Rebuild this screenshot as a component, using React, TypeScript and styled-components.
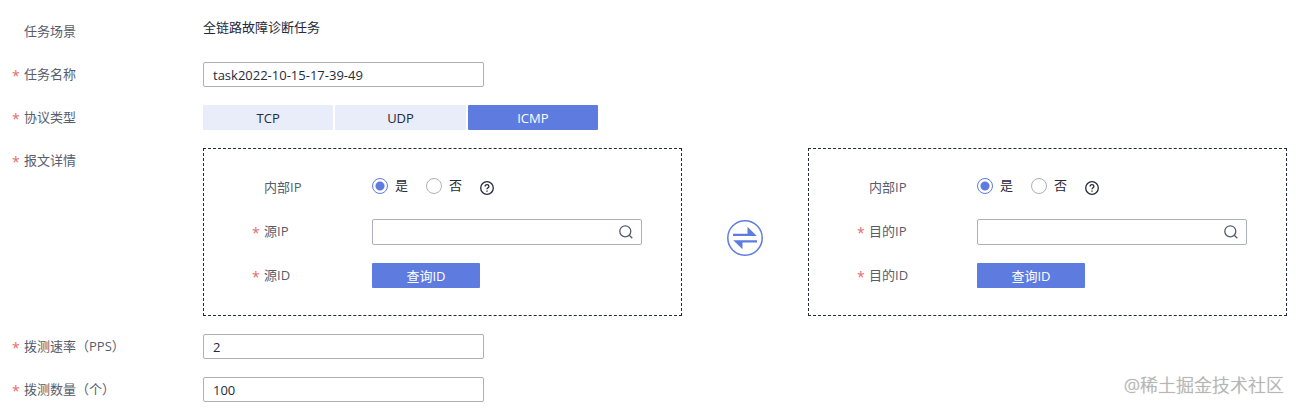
import React, { useId, useState } from "react";
import styled, { createGlobalStyle } from "styled-components";

const BLUE = "#5e7ce0";
const INK = "#252b3a";
const FONT = '"Open Sans", "Noto Sans CJK SC", sans-serif';

const GlobalStyle = createGlobalStyle`
  *, *::before, *::after { box-sizing: border-box; }
  body {
    margin: 0;
    background: #fff;
    color: ${INK};
    font: 13px/16px ${FONT};
  }
  button, input { font: inherit; color: inherit; }
`;

const Form = styled.form`
  position: relative;
  display: flex;
  flex-direction: column;
  gap: 18px;
  padding: 19px 11px 8px 12px;
`;

const Row = styled.div<{ $labelWidth: number }>`
  display: grid;
  grid-template-columns: ${(p) => p.$labelWidth}px minmax(0, 1fr);
  align-items: start;
  min-height: 25px;
`;

const LabelText = styled.label<{ $required?: boolean }>`
  display: flex;
  height: 24px;
  line-height: 24px;
  color: #575d6c;
  &::before {
    content: "${(p) => (p.$required ? "*" : "")}";
    width: 12px;
    flex: none;
    padding-top: 2px;
    color: #e8696b;
    font-size: 14px;
  }
`;

const TextInput = styled.input`
  width: 281px;
  height: 25px;
  padding: 0 9px;
  border: 1px solid #adb0b8;
  border-radius: 2px;
  background: #fff;
  outline: none;
`;

const Segments = styled.div`
  display: grid;
  grid-template-columns: repeat(3, 1fr);
  gap: 2px;
  width: 395px;
`;

const Segment = styled.button<{ $active: boolean }>`
  height: 25px;
  padding: 0;
  border: 0;
  border-radius: 1px;
  background: ${(p) => (p.$active ? BLUE : "#e9edfa")};
  color: ${(p) => (p.$active ? "#fff" : INK)};
`;

const Endpoints = styled.div`
  display: grid;
  grid-template-columns: minmax(0, 1fr) 36px minmax(0, 1fr);
  column-gap: 45px;
`;

const Panel = styled.fieldset`
  display: flex;
  flex-direction: column;
  gap: 18px;
  min-width: 0;
  margin: 0;
  padding: 26px 39px 27px 48px;
  border: 1px dashed #252b3a;
`;

const Radios = styled.div`
  display: flex;
  align-items: flex-start;
  gap: 18px;
  height: 26px;
  padding-top: 3px;
`;

const RadioLabel = styled.label`
  display: flex;
  gap: 7px;
  line-height: 14px;
`;

const Radio = styled.input`
  appearance: none;
  width: 16px;
  height: 16px;
  margin: 0;
  border: 1px solid #adb0b8;
  border-radius: 50%;
  background: #fff;
  &:checked {
    border-color: ${BLUE};
    background: radial-gradient(circle, ${BLUE} 0 4px, #fff 5px);
  }
`;

const HelpButton = styled.button`
  display: flex;
  padding: 3px 0 0;
  border: 0;
  background: none;
`;

const SearchField = styled.div`
  display: flex;
  align-items: center;
  height: 26px;
  padding-right: 8px;
  border: 1px solid #adb0b8;
  border-radius: 2px;
`;

const SearchInput = styled.input`
  flex: 1;
  min-width: 0;
  height: 24px;
  padding: 0 9px;
  border: 0;
  background: none;
  outline: none;
`;

const IconButton = styled.button`
  display: flex;
  padding: 0;
  border: 0;
  background: none;
`;

const QueryButton = styled.button`
  width: 108px;
  height: 25px;
  padding: 0;
  border: 0;
  border-radius: 1px;
  background: ${BLUE};
  color: #fff;
`;

const SwapButton = styled.button`
  align-self: center;
  display: flex;
  margin-top: 12px;
  padding: 0;
  border: 0;
  background: none;
`;

const Watermark = styled.div`
  position: absolute;
  right: 14px;
  bottom: 13px;
  font-size: 18px;
  line-height: 24px;
  font-weight: 300;
  color: #b4b4b4;
  text-shadow: 0 0 1px #aaa;
  pointer-events: none;
`;

function HelpIcon() {
  return (
    <svg width="14" height="14" viewBox="0 0 14 14" fill="none" stroke={INK} strokeWidth="1.3">
      <circle cx="7" cy="7" r="6.3" />
      <path d="M5.1 5.6C5.1 4.3 5.9 3.7 7 3.7S8.9 4.4 8.9 5.4C8.9 6.7 7 6.7 7 8.3" />
      <path d="M7 9.4V10.7" />
    </svg>
  );
}

function SearchIcon() {
  return (
    <svg width="14" height="14" viewBox="0 0 14 14" fill="none" stroke="#575d6c" strokeWidth="1.3">
      <circle cx="6.3" cy="6.3" r="5.5" />
      <path d="M10.3 10.3L13.3 13.3" />
    </svg>
  );
}

function SwapIcon() {
  return (
    <svg width="36" height="36" viewBox="0 0 36 36" fill={BLUE}>
      <circle cx="18" cy="18" r="17.2" fill="none" stroke={BLUE} strokeWidth="1.5" />
      <path d="M6 13.8H20.5V6.8L29.8 16H6Z" />
      <path d="M30 20.2H6.2L15.5 29.2V22.4H30Z" />
    </svg>
  );
}

interface FieldProps {
  label: string;
  htmlFor?: string;
  required?: boolean;
  labelWidth?: number;
  children: React.ReactNode;
}

function Field({ label, htmlFor, required, labelWidth = 191, children }: FieldProps) {
  return (
    <Row $labelWidth={labelWidth}>
      <LabelText as={htmlFor ? "label" : "span"} htmlFor={htmlFor} $required={required}>
        {label}
      </LabelText>
      {children}
    </Row>
  );
}

function EndpointPanel({ name }: { name: string }) {
  const id = useId();
  const [internal, setInternal] = useState(true);
  return (
    <Panel aria-label={name}>
      <Field label="内部IP" labelWidth={120}>
        <Radios role="radiogroup" aria-label="内部IP">
          <RadioLabel>
            <Radio type="radio" name={id + "internal"} checked={internal} onChange={() => setInternal(true)} />
            是
          </RadioLabel>
          <RadioLabel>
            <Radio type="radio" name={id + "internal"} checked={!internal} onChange={() => setInternal(false)} />
            否
          </RadioLabel>
          <HelpButton type="button" aria-label="帮助"><HelpIcon /></HelpButton>
        </Radios>
      </Field>
      <Field label={name + "IP"} htmlFor={id + "ip"} required labelWidth={120}>
        <SearchField>
          <SearchInput id={id + "ip"} />
          <IconButton type="button" aria-label="搜索"><SearchIcon /></IconButton>
        </SearchField>
      </Field>
      <Field label={name + "ID"} htmlFor={id + "query"} required labelWidth={120}>
        <QueryButton id={id + "query"} type="button">查询ID</QueryButton>
      </Field>
    </Panel>
  );
}

export default function App() {
  const [protocol, setProtocol] = useState("ICMP");
  return (
    <>
      <GlobalStyle />
      <Form onSubmit={(e) => e.preventDefault()}>
        <Field label="任务场景">
          <span>全链路故障诊断任务</span>
        </Field>
        <Field label="任务名称" htmlFor="task-name" required>
          <TextInput id="task-name" defaultValue="task2022-10-15-17-39-49" />
        </Field>
        <Field label="协议类型" required>
          <Segments role="group" aria-label="协议类型">
            {["TCP", "UDP", "ICMP"].map((p) => (
              <Segment key={p} type="button" $active={p === protocol} aria-pressed={p === protocol} onClick={() => setProtocol(p)}>
                {p}
              </Segment>
            ))}
          </Segments>
        </Field>
        <Field label="报文详情" required>
          <Endpoints>
            <EndpointPanel name="源" />
            <SwapButton type="button" aria-label="交换"><SwapIcon /></SwapButton>
            <EndpointPanel name="目的" />
          </Endpoints>
        </Field>
        <Field label="拨测速率（PPS）" htmlFor="rate" required>
          <TextInput id="rate" defaultValue="2" />
        </Field>
        <Field label="拨测数量（个）" htmlFor="count" required>
          <TextInput id="count" defaultValue="100" />
        </Field>
        <Watermark>@稀土掘金技术社区</Watermark>
      </Form>
    </>
  );
}
